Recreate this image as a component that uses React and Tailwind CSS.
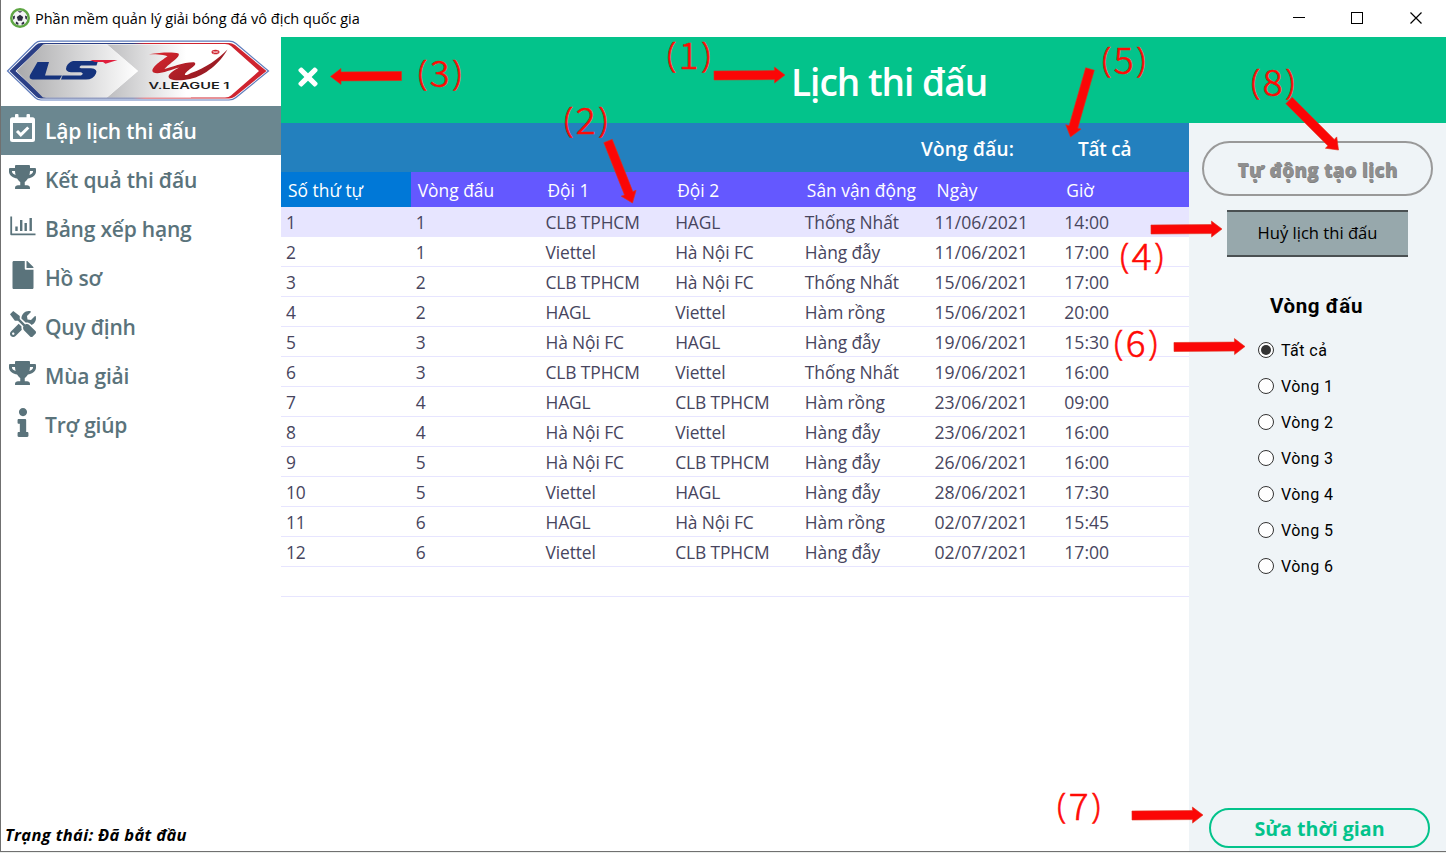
import React from "react";
import { FaTrophy, FaFile, FaTools, FaInfo, FaTimes } from "react-icons/fa";

const CalendarIcon = () => (
  <svg viewBox="0 0 25 28" className="h-7 w-[25px]" fill="none">
    <rect x="5" y="0" width="3.5" height="6" rx="1" fill="currentColor" />
    <rect x="16.5" y="0" width="3.5" height="6" rx="1" fill="currentColor" />
    <path
      fill="currentColor"
      fillRule="evenodd"
      d="M2.5 3.2h20A2.5 2.5 0 0 1 25 5.7v19.8a2.5 2.5 0 0 1-2.5 2.5h-20A2.5 2.5 0 0 1 0 25.500V5.7a2.5 2.5 0 0 1 2.5-2.500zM3 9v15.500a.6.6 0 0 0 .6.6h17.800a.6.6 0 0 0 .6-.6V9z"
    />
    <path d="M7 17l3.800 3.800L18.300 13.500" stroke="currentColor" strokeWidth="3" />
  </svg>
);

const ChartIcon = () => (
  <svg viewBox="0 0 26 20" className="h-5 w-[26px]" stroke="currentColor" fill="none">
    <path d="M1.2 0.500V18.300H25.500" strokeWidth="1.800" strokeLinejoin="round" />
    <path d="M6.500 10.500V15M11.200 4V15M15.700 7V15M20.700 2V15" strokeWidth="2.400" />
  </svg>
);

const MENU = [
  { label: "Lập lịch thi đấu", icon: <CalendarIcon /> },
  { label: "Kết quả thi đấu", icon: <FaTrophy className="h-6 w-[27px]" /> },
  { label: "Bảng xếp hạng", icon: <ChartIcon /> },
  { label: "Hồ sơ", icon: <FaFile className="h-[28px] w-[22px]" /> },
  { label: "Quy định", icon: <FaTools className="size-[26px]" /> },
  { label: "Mùa giải", icon: <FaTrophy className="h-6 w-[27px]" /> },
  { label: "Trợ giúp", icon: <FaInfo className="h-[29px] w-[12px]" /> },
];

const COLUMNS = ["Số thứ tự", "Vòng đấu", "Đội 1", "Đội 2", "Sân vận động", "Ngày", "Giờ"];

const ROWS = [
  ["1", "1", "CLB TPHCM", "HAGL", "Thống Nhất", "11/06/2021", "14:00"],
  ["2", "1", "Viettel", "Hà Nội FC", "Hàng đẫy", "11/06/2021", "17:00"],
  ["3", "2", "CLB TPHCM", "Hà Nội FC", "Thống Nhất", "15/06/2021", "17:00"],
  ["4", "2", "HAGL", "Viettel", "Hàm rồng", "15/06/2021", "20:00"],
  ["5", "3", "Hà Nội FC", "HAGL", "Hàng đẫy", "19/06/2021", "15:30"],
  ["6", "3", "CLB TPHCM", "Viettel", "Thống Nhất", "19/06/2021", "16:00"],
  ["7", "4", "HAGL", "CLB TPHCM", "Hàm rồng", "23/06/2021", "09:00"],
  ["8", "4", "Hà Nội FC", "Viettel", "Hàng đẫy", "23/06/2021", "16:00"],
  ["9", "5", "Hà Nội FC", "CLB TPHCM", "Hàng đẫy", "26/06/2021", "16:00"],
  ["10", "5", "Viettel", "HAGL", "Hàng đẫy", "28/06/2021", "17:30"],
  ["11", "6", "HAGL", "Hà Nội FC", "Hàm rồng", "02/07/2021", "15:45"],
  ["12", "6", "Viettel", "CLB TPHCM", "Hàng đẫy", "02/07/2021", "17:00"],
  ["", "", "", "", "", "", ""],
];

const ROUNDS = ["Tất cả", "Vòng 1", "Vòng 2", "Vòng 3", "Vòng 4", "Vòng 5", "Vòng 6"];

function Logo() {
  return (
    <svg viewBox="0 0 280 69" className="h-[69px] w-[280px] shrink-0">
      <defs>
        <linearGradient id="silver" x1="0" x2="1">
          <stop offset="0" stopColor="#a9a9ab" />
          <stop offset="1" stopColor="#ffffff" />
        </linearGradient>
        <linearGradient id="silverRight" gradientUnits="userSpaceOnUse" x1="106" x2="185" y1="0" y2="0">
          <stop offset="0" stopColor="#bdbdbf" />
          <stop offset="1" stopColor="#ffffff" />
        </linearGradient>
        <linearGradient id="rim" x1="0" x2="1">
          <stop offset="0.48" stopColor="#2b3f86" />
          <stop offset="0.53" stopColor="#cf2430" />
        </linearGradient>
        <linearGradient id="wave" x1="0" x2="1" y2="0.6">
          <stop offset="0" stopColor="#e0262f" />
          <stop offset="1" stopColor="#8e1a22" />
        </linearGradient>
      </defs>
      <path d="M6.500 34L34 6.500Q36.500 4.200 40 4.200H228Q232 4.200 235 6.500L267.500 34L235 60.500Q232 63 228 63H40Q36.500 63 34 60.500Z" fill="#fff" stroke="#5f7cbc" strokeWidth="1.200" />
      <path d="M8.500 34L35 8Q37 6 40 6H228Q231 6 234 8L265.500 34L234 59.500Q231 61.500 228 61.500H40Q37 61.500 35 59.500Z" fill="url(#rim)" />
      <path d="M14.500 34L41 9Q42 7 45 7H224Q228 7 230 9L258 34L230 58.500Q228 60.500 224 60.500H45Q42 60.500 41 58.500Z" fill="#fff" />
      <path d="M106 7.500H190V60.500H106L137 34Z" fill="url(#silverRight)" />
      <path d="M15.500 34L42 7.500H106L137 34L106 60.500H42Z" fill="url(#silver)" />
      <path d="M36.500 25H48L44 38.500H61L58.500 42.500H31.500Q27.500 42 29 38Z" fill="#15337d" />
      <path d="M72 24H97L95.500 28.500H80Q77 30.500 80 31.300H90Q97 32 95 36.500Q92.500 42.500 85 42.500H60L61.500 38.500H80Q83.500 36.800 80 35.300H70Q63.500 34.500 65.500 29.500Q67.500 25 72 24Z" fill="#15337d" />
      <path d="M89 23H116.500L104.500 26.800L102 25H94Z" fill="#e01f3d" />
      <path
        d="M148 17.300C160 15.200 172 14.800 177.500 16.500C180 20 168 26.500 163.500 32C170 30.500 183 25 193 25.300C198 28 187 32 184 37C183 39 187 38 190 36C205 31 217 22 226.500 12.500C219 26 204 39 189 42C177 44.500 165 43.500 168 38C170 35 175 32 178 30.500C169 33 158 38 152.500 35.500C148 32 159 24.500 166.500 19.300C161 17.300 153 17.300 148 17.300Z"
        fill="url(#wave)"
      />
      <ellipse cx="214.500" cy="15" rx="4" ry="2.300" fill="#cf2430" />
      <path d="M211.500 14L217.500 16.200M217.500 13.800L212 16.200" stroke="#fff" strokeWidth="0.600" />
      <text x="147.500" y="52.300" textLength="81" lengthAdjust="spacingAndGlyphs" fontSize="8.800" className="font-[Inter] font-semibold" fill="#1c1c1c">
        V.LEAGUE 1
      </text>
    </svg>
  );
}

function Ball() {
  return (
    <svg viewBox="0 0 20 20" className="mb-0.5 size-5">
      <circle cx="10" cy="10" r="10" fill="#5fa644" />
      <circle cx="10" cy="10" r="7.500" fill="#f4f4f6" />
      <path d="M10 6.800L13.200 9.100L12 12.700H8L6.800 9.100ZM7.500 3.200H12.500L10 4.800ZM2.900 8.500L5 7.500L4.600 10.800L3.200 11.800ZM17.100 8.500L15 7.500L15.400 10.800L16.800 11.800ZM5.500 15.600L6.200 13.500L8.500 15L8.200 17ZM14.500 15.600L13.800 13.500L11.500 15L11.800 17Z" fill="#2c2c40" />
    </svg>
  );
}

function TitleBar() {
  return (
    <header className="flex h-[37px] shrink-0 items-center bg-white pr-[23px] pl-[9px]">
      <Ball />
      <span className="ml-[5px] text-[14.5px] text-black">Phần mềm quản lý giải bóng đá vô địch quốc gia</span>
      <svg viewBox="0 0 131 14" className="mb-px ml-auto h-3.5 w-[131px]" stroke="#000" fill="none">
        <path d="M1 6.500H13" />
        <rect x="59.500" y="1.500" width="11" height="11" />
        <path d="M118.500 1.500L129.500 12.500M129.500 1.500L118.500 12.500" strokeWidth="1.200" />
      </svg>
    </header>
  );
}

function Sidebar() {
  return (
    <aside className="flex w-[280px] shrink-0 flex-col bg-white">
      <Logo />
      <nav className="flex flex-col">
        {MENU.map((item, i) => (
          <div
            key={item.label}
            className={
              i === 0
                ? "flex h-[49px] items-center bg-[#6b8790] text-white"
                : "flex h-[49px] items-center bg-white text-[#5a737b]"
            }
          >
            <span className="flex w-[43px] justify-center pb-[5px]">{item.icon}</span>
            <span className="pt-0.5 pl-px text-[21px] font-semibold tracking-[-0.2px]">{item.label}</span>
          </div>
        ))}
      </nav>
      <p className="mt-auto pb-[3px] pl-1 text-[16.5px] font-bold tracking-[0.33px] text-black italic">Trạng thái: Đã bắt đầu</p>
    </aside>
  );
}

function Schedule() {
  return (
    <section className="flex w-[908px] flex-col bg-white">
      <div className="flex h-[49px] items-center bg-[#2380be] pt-[3px] text-[19px] font-semibold text-white">
        <span className="ml-[640px] w-[157px] tracking-[0.2px]">Vòng đấu:</span>
        <span className="tracking-[-0.25px]">Tất cả</span>
      </div>
      <div className="grid h-[35px] grid-cols-7 bg-[#6458ff] text-[17.4px] text-white">
        {COLUMNS.map((c, i) => (
          <span
            key={c}
            className={i === 0 ? "flex items-center bg-[#0078d7] pt-0.5 pl-[7px]" : "flex items-center pt-0.5 pl-[7px]"}
          >
            {c}
          </span>
        ))}
      </div>
      {ROWS.map((row, i) => (
        <div
          key={i}
          className={
            i === 0
              ? "grid h-[30px] grid-cols-7 border-b border-[#e7e5ff] bg-[#e7e5ff]"
              : "grid h-[30px] grid-cols-7 border-b border-[#e7e5ff] bg-white"
          }
        >
          {row.map((cell, j) => (
            <span
              key={j}
              className={
                j > 4
                  ? "flex items-center pt-0.5 pl-[5px] text-[17.6px] text-[#47455e]"
                  : "flex items-center pt-0.5 pl-[5px] text-[17.4px] tracking-[-0.1px] text-[#47455e]"
              }
            >
              {cell}
            </span>
          ))}
        </div>
      ))}
    </section>
  );
}

function Panel() {
  return (
    <section className="flex flex-1 flex-col bg-[#eff4f7]">
      <button className="mt-[18px] ml-[13px] flex h-[55px] w-[231px] items-center justify-center rounded-full border-2 border-[#999] pt-1 text-[19px] font-extrabold tracking-[0.1px] text-[#8f8f8f] [text-shadow:0.5px_0.5px_0_#808080]">
        Tự động tạo lịch
      </button>
      <button className="mt-3.5 ml-[38px] flex h-[47px] w-[181px] items-center justify-center border-y-2 border-[#4a5052] bg-[#97a8ac] text-[16.6px] text-black">
        Huỷ lịch thi đấu
      </button>
      <h2 className="mt-[35px] ml-[81px] h-[29px] font-[Roboto] text-[20.5px] leading-[29px] font-bold tracking-[0.6px] text-black">
        Vòng đấu
      </h2>
      <div className="mt-[11px] ml-[69px] flex flex-col">
        {ROUNDS.map((r, i) => (
          <label key={r} className="flex h-9 items-center gap-[7px] font-[Roboto] text-[16px] tracking-[0.45px] text-black">
            <span className="flex size-4 items-center justify-center rounded-full border border-[#333] bg-white">
              {i === 0 && <span className="size-2.5 rounded-full bg-[#333]" />}
            </span>
            <span className="pt-0.5">{r}</span>
          </label>
        ))}
      </div>
      <button className="mt-auto mb-[3px] ml-5 flex h-10 w-[221px] items-center justify-center rounded-full border-2 border-[#03c38b] pt-0.5 text-[19.6px] font-bold text-[#03c38b]">
        Sửa thời gian
      </button>
    </section>
  );
}

function Arrow({ x1, y1, x2, y2 }) {
  const len = Math.hypot(x2 - x1, y2 - y1);
  const angle = (Math.atan2(y2 - y1, x2 - x1) * 180) / Math.PI;
  const neck = len - 10.5;
  return (
    <polygon
      points={`0,-4.500 ${neck},-4.500 ${neck},-8 ${len},0 ${neck},8 ${neck},4.500 0,4.500`}
      transform={`translate(${x1} ${y1}) rotate(${angle})`}
      fill="#fb0606"
      stroke="#e0301c"
      strokeWidth="0.600"
    />
  );
}

function Note({ n, className }) {
  return (
    <span className={`absolute flex items-baseline text-[37px] leading-[38px] ${className}`}>
      <span className="-translate-y-0.5 font-['Open_Sans'] text-[34px]">(</span>
      <span className="w-[25px] text-center font-['Noto_Sans_CJK_SC',sans-serif]">{n}</span>
      <span className="-translate-y-0.5 font-['Open_Sans'] text-[34px]">)</span>
    </span>
  );
}

function Annotations() {
  return (
    <div className="pointer-events-none absolute inset-0 font-light text-[#ff0a05] [-webkit-text-stroke:0.6px_#ff0a05]">
      <svg viewBox="0 0 1446 853" className="absolute inset-0 h-[853px] w-[1446px]">
        <Arrow x1={714} y1={75.5} x2={785} y2={75} />
        <Arrow x1={608} y1={141} x2={632.5} y2={203} />
        <Arrow x1={401.5} y1={76} x2={330.500} y2={76.5} />
        <Arrow x1={1151} y1={229.5} x2={1222} y2={229} />
        <Arrow x1={1090} y1={69} x2={1070.5} y2={137} />
        <Arrow x1={1174} y1={347} x2={1245} y2={346.5} />
        <Arrow x1={1132} y1={815.5} x2={1203} y2={815} />
        <Arrow x1={1289} y1={100.5} x2={1338.5} y2={150} />
      </svg>
      <Note n="1" className="top-[34px] left-[667px]" />
      <Note n="2" className="top-[99px] left-[564px]" />
      <Note n="3" className="top-[52px] left-[418px]" />
      <Note n="4" className="top-[235px] left-[1120px]" />
      <Note n="5" className="top-[39px] left-[1102px]" />
      <Note n="6" className="top-[322px] left-[1114px]" />
      <Note n="7" className="top-[785px] left-[1057px]" />
      <Note n="8" className="top-[61px] left-[1251px]" />
    </div>
  );
}

export default function App() {
  return (
    <div className="relative flex h-[853px] w-[1446px] flex-col overflow-hidden bg-[#ecefed] pb-px font-['Open_Sans','Noto_Sans',sans-serif] whitespace-nowrap">
      <div className="flex flex-1 flex-col border-b border-l border-[#707070]">
        <TitleBar />
        <div className="flex flex-1">
          <Sidebar />
          <main className="flex flex-1 flex-col">
            <div className="flex h-[86px] shrink-0 items-center bg-[#03c38b] text-white">
              <FaTimes className="mb-[6px] ml-[13px] size-[28px]" />
              <h1 className="ml-[469px] pt-[3px] text-[37px] font-semibold tracking-[-1px]">Lịch thi đấu</h1>
            </div>
            <div className="flex flex-1">
              <Schedule />
              <Panel />
            </div>
          </main>
        </div>
      </div>
      <Annotations />
    </div>
  );
}
